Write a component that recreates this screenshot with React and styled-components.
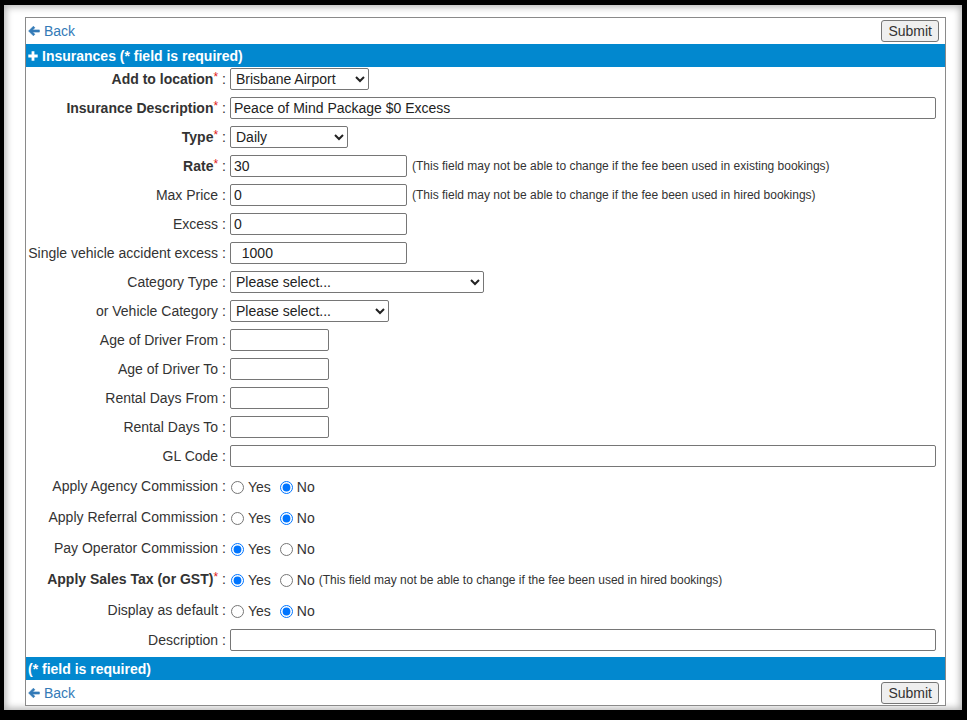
import React from "react";
import styled, { createGlobalStyle } from "styled-components";

const GlobalStyle = createGlobalStyle`
  html, body {
    margin: 0;
    padding: 0;
    background: #000;
  }
  body {
    font-family: "Liberation Sans", Arial, sans-serif;
    font-size: 14px;
    color: #333;
  }
`;

const Frame = styled.div`
  width: 967px;
  height: 720px;
  box-sizing: border-box;
  padding: 5px 5px 10px 4px;
  background: #000;
`;

const Window = styled.div`
  height: 100%;
  box-sizing: border-box;
  padding: 12px 16px 4px 21px;
  background: #fff;
  box-shadow: inset 0 0 7px 2px rgba(0, 0, 0, 0.3);
`;

const Panel = styled.div`
  height: 100%;
  box-sizing: border-box;
  border: 1px solid #8a8a8a;
  background: #fff;
  display: flex;
  flex-direction: column;
`;

const ActionRow = styled.div`
  height: ${(p) => p.$h}px;
  display: flex;
  align-items: center;
  justify-content: space-between;
  padding: 0 6px 0 2px;
`;

const BackLink = styled.a`
  display: flex;
  align-items: center;
  gap: 4px;
  color: #337ab7;
  text-decoration: none;
  font-size: 14px;
  cursor: pointer;
`;

const SubmitButton = styled.button`
  height: 22px;
  padding: 0 6px;
  font-family: "Liberation Sans", Arial, sans-serif;
  font-size: 14px;
  color: #333;
  background: #efefef;
  border: 1px solid #767676;
  border-radius: 3px;
`;

const Bar = styled.div`
  height: 23px;
  background: #0288cf;
  color: #fff;
  font-weight: bold;
  font-size: 14px;
  display: flex;
  align-items: center;
  gap: 4px;
  padding-left: 2px;
`;

const Form = styled.div`
  flex: 1;
  display: grid;
  grid-template-columns: 204px 1fr;
  row-gap: 7px;
  padding: 1px 0 6px;
  align-content: start;
`;

const Label = styled.div`
  display: flex;
  align-items: center;
  justify-content: flex-end;
  padding-right: 4px;
  white-space: nowrap;
  font-weight: ${(p) => (p.$bold ? "bold" : "normal")};
  color: #333;
`;

const Star = styled.span`
  color: #e02020;
  font-weight: normal;
  font-size: 12px;
  align-self: flex-start;
  margin-top: ${(p) => p.$top}px;
`;

const Colon = styled.span`
  font-weight: normal;
  margin-left: 4px;
`;

const Field = styled.div`
  height: ${(p) => p.$h || 22}px;
  display: flex;
  align-items: center;
  padding-right: 9px;
`;

const TextInput = styled.input`
  box-sizing: border-box;
  height: 22px;
  width: ${(p) => (p.$w ? `${p.$w}px` : "100%")};
  padding: 1px 3px;
  border: 1px solid #767676;
  border-radius: 2px;
  font-family: "Liberation Sans", Arial, sans-serif;
  font-size: 14px;
  color: #222;
  background: #fff;
  white-space: pre;
`;

const Select = styled.select`
  box-sizing: border-box;
  height: 22px;
  width: ${(p) => p.$w}px;
  padding: 0 1px;
  border: 1px solid #767676;
  border-radius: 2px;
  font-family: "Liberation Sans", Arial, sans-serif;
  font-size: 14px;
  color: #222;
  background: #fff;
`;

const Note = styled.span`
  margin-left: ${(p) => (p.$tight ? -4 : 5)}px;
  padding-top: ${(p) => (p.$tight ? 2 : 0)}px;
  font-size: 12px;
  color: #333;
  white-space: nowrap;
`;

const RadioItem = styled.label`
  display: flex;
  align-items: center;
  margin-right: 8px;
  color: #333;
  padding-top: 2px;

  input {
    width: 13px;
    height: 13px;
    margin: 0 4px 0 1px;
  }
`;

// chunky arrow like the old font-awesome arrow-left
const ArrowIcon = () => (
  <svg width="12" height="12" viewBox="0 0 12 12" aria-hidden="true">
    <path
      d="M0.6 6 L5.4 1.2 L6.9 2.7 L4.6 4.9 H11.4 V7.1 H4.6 L6.9 9.3 L5.4 10.8 Z"
      fill="currentColor"
      stroke="currentColor"
      strokeWidth="0.6"
      strokeLinejoin="round"
    />
  </svg>
);

const PlusIcon = () => (
  <svg width="10" height="10" viewBox="0 0 10 10" aria-hidden="true">
    <path
      d="M3.6 0.3 H6.4 V3.6 H9.7 V6.4 H6.4 V9.7 H3.6 V6.4 H0.3 V3.6 H3.6 Z"
      fill="currentColor"
    />
  </svg>
);

const textRows = [
  { label: "Add to location", req: true, kind: "select", w: 139, options: ["Brisbane Airport"] },
  { label: "Insurance Description", req: true, kind: "input", value: "Peace of Mind Package $0 Excess" },
  { label: "Type", req: true, kind: "select", w: 118, options: ["Daily"] },
  {
    label: "Rate",
    req: true,
    kind: "input",
    w: 177,
    value: "30",
    note: "(This field may not be able to change if the fee been used in existing bookings)",
  },
  {
    label: "Max Price",
    kind: "input",
    w: 177,
    value: "0",
    note: "(This field may not be able to change if the fee been used in hired bookings)",
  },
  { label: "Excess", kind: "input", w: 177, value: "0" },
  { label: "Single vehicle accident excess", kind: "input", w: 177, value: "  1000" },
  { label: "Category Type", kind: "select", w: 254, options: ["Please select..."] },
  { label: "or Vehicle Category", kind: "select", w: 159, options: ["Please select..."] },
  { label: "Age of Driver From", kind: "input", w: 99, value: "" },
  { label: "Age of Driver To", kind: "input", w: 99, value: "" },
  { label: "Rental Days From", kind: "input", w: 99, value: "" },
  { label: "Rental Days To", kind: "input", w: 99, value: "" },
  { label: "GL Code", kind: "input", value: "" },
];

const radioRows = [
  { name: "agency", label: "Apply Agency Commission", yes: false },
  { name: "referral", label: "Apply Referral Commission", yes: false },
  { name: "operator", label: "Pay Operator Commission", yes: true },
  {
    name: "tax",
    label: "Apply Sales Tax (or GST)",
    req: true,
    yes: true,
    note: "(This field may not be able to change if the fee been used in hired bookings)",
  },
  { name: "default", label: "Display as default", yes: false },
];

const RowLabel = ({ text, req, starTop = 2 }) => (
  <Label $bold={req}>
    {text}
    {req && <Star $top={starTop}>*</Star>}
    <Colon>:</Colon>
  </Label>
);

const App = () => {
  return (
    <Frame>
      <GlobalStyle />
      <Window>
        <Panel>
          <ActionRow $h={26}>
            <BackLink>
              <ArrowIcon />
              Back
            </BackLink>
            <SubmitButton>Submit</SubmitButton>
          </ActionRow>
          <Bar>
            <PlusIcon />
            Insurances (* field is required)
          </Bar>

          <Form>
            {textRows.map((r) => (
              <React.Fragment key={r.label}>
                <RowLabel text={r.label} req={r.req} />
                <Field>
                  {r.kind === "select" ? (
                    <Select $w={r.w} defaultValue={r.options[0]}>
                      {r.options.map((o) => (
                        <option key={o}>{o}</option>
                      ))}
                    </Select>
                  ) : (
                    <TextInput type="text" $w={r.w} defaultValue={r.value} />
                  )}
                  {r.note && <Note>{r.note}</Note>}
                </Field>
              </React.Fragment>
            ))}

            {radioRows.map((r) => (
              <React.Fragment key={r.name}>
                <RowLabel text={r.label} req={r.req} starTop={3} />
                <Field $h={24}>
                  <RadioItem>
                    <input type="radio" name={r.name} defaultChecked={r.yes} />
                    Yes
                  </RadioItem>
                  <RadioItem>
                    <input type="radio" name={r.name} defaultChecked={!r.yes} />
                    No
                  </RadioItem>
                  {r.note && <Note $tight>{r.note}</Note>}
                </Field>
              </React.Fragment>
            ))}

            <RowLabel text="Description" />
            <Field>
              <TextInput type="text" defaultValue="" />
            </Field>
          </Form>

          <Bar>(* field is required)</Bar>
          <ActionRow $h={25}>
            <BackLink>
              <ArrowIcon />
              Back
            </BackLink>
            <SubmitButton>Submit</SubmitButton>
          </ActionRow>
        </Panel>
      </Window>
    </Frame>
  );
};

export default App;
